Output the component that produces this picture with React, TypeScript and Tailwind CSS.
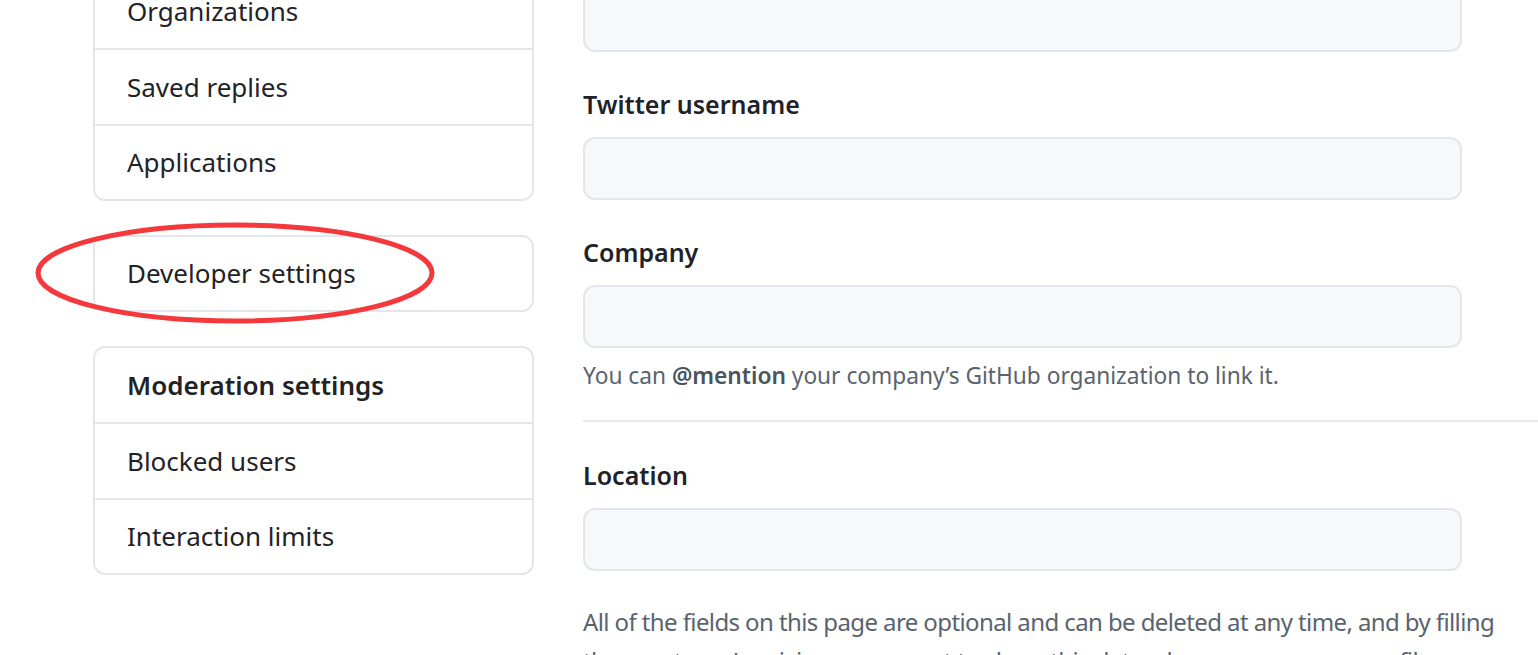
const font = { fontFamily: '"Noto Sans", "Open Sans", sans-serif' };

function MenuBox({ items, title }: { items: string[]; title?: string }) {
  return (
    <div className="rounded-[12px] border-2 border-[#e3e6ea] bg-white">
      {title && (
        <div className="flex h-[76px] items-center border-b-2 border-[#e3e6ea] pl-[32px] text-[26px] font-semibold text-[#1f2328]">
          {title}
        </div>
      )}
      {items.map((item, i) => {
        const last = i === items.length - 1;
        return (
          <div
            key={item}
            className={`flex items-center pl-[32px] text-[26px] text-[#1f2328] ${
              last ? "h-[73px]" : "h-[76px] border-b-2 border-[#e3e6ea]"
            }`}
          >
            {item}
          </div>
        );
      })}
    </div>
  );
}

function Field({ label }: { label: string }) {
  return (
    <div>
      <div className="text-[25px] font-semibold leading-[30px] text-[#1f2328]">{label}</div>
      <div className="mt-[18px] h-[63px] w-[879px] rounded-[12px] border-2 border-[#e3e6ea] bg-[#f7f8fa]" />
    </div>
  );
}

export default function App() {
  return (
    <div className="relative h-[655px] w-[1538px] overflow-hidden bg-white" style={font}>
      <div className="flex">
        {/* sidebar */}
        <div className="ml-[93px] -mt-[28px] flex w-[441px] shrink-0 flex-col gap-[34px]">
          <MenuBox items={["Organizations", "Saved replies", "Applications"]} />
          <MenuBox items={["Developer settings"]} />
          <MenuBox title="Moderation settings" items={["Blocked users", "Interaction limits"]} />
        </div>

        {/* profile form */}
        <div className="-mt-[12px] ml-[49px] flex-1">
          <div className="h-[64px] w-[879px] rounded-[12px] border-2 border-[#e3e6ea] bg-[#f7f8fa]" />
          <div className="mt-[37px]">
            <Field label="Twitter username" />
          </div>
          <div className="mt-[37px]">
            <Field label="Company" />
          </div>
          <p className="mt-[12px] text-[22.7px] leading-[32px] text-[#59636e]">
            You can <span className="font-semibold text-[#4b535c]">@mention</span> your company’s GitHub organization to link it.
          </p>
          <div className="mt-[28px] border-t-2 border-[#e8eaed]" />
          <div className="mt-[38px]">
            <Field label="Location" />
          </div>
          <p className="mt-[31px] w-[960px] text-[24px] leading-[39px] tracking-[-0.6px] text-[#59636e]">
            All of the fields on this page are optional and can be deleted at any time, and by filling them out, you're giving us consent to share this data wherever your user profile appears.
          </p>
        </div>
      </div>

      {/* red highlight ring */}
      <svg className="pointer-events-none absolute left-[34px] top-[221px]" width="402" height="104" viewBox="0 0 402 104">
        <ellipse cx="201" cy="52" rx="197" ry="48" fill="none" stroke="#f5383b" strokeWidth="5" />
      </svg>
    </div>
  );
}
